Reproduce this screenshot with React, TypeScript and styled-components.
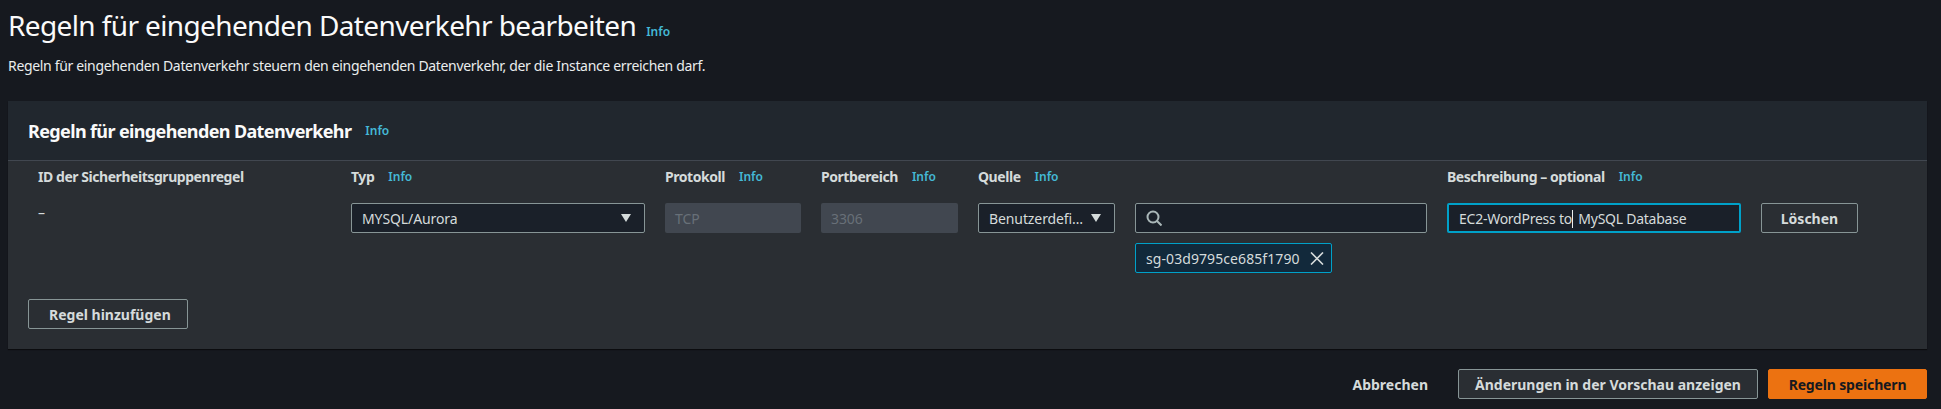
import React from 'react';
import styled, { createGlobalStyle } from 'styled-components';

const GlobalStyle = createGlobalStyle`
  html, body {
    margin: 0;
    padding: 0;
    background: #16191f;
  }
  body {
    font-family: 'Noto Sans', 'Liberation Sans', sans-serif;
    color: #d5dbdb;
    overflow: hidden;
  }
`;

const Page = styled.div`
  width: 1941px;
  height: 409px;
  box-sizing: border-box;
  padding: 0 14px 0 8px;
  display: flex;
  flex-direction: column;
`;

const PageHeader = styled.header`
  height: 101px;
  flex: none;
`;

const TitleRow = styled.div`
  display: flex;
  align-items: baseline;
  gap: 10px;
  padding-top: 7px;
`;

const PageTitle = styled.h1`
  margin: 0;
  font-size: 28px;
  line-height: 36px;
  font-weight: 400;
  color: #fafafa;
  letter-spacing: -0.62px;
`;

const InfoLink = styled.a`
  font-size: 12px;
  font-weight: 600;
  letter-spacing: 0;
  color: #44b9d6;
`;

const PageDescription = styled.p`
  margin: 13px 0 0;
  font-size: 14px;
  line-height: 20px;
  color: #eaeded;
  letter-spacing: -0.33px;
`;

const Panel = styled.section`
  height: 248px;
  flex: none;
  display: flex;
  flex-direction: column;
  background: #2a2e33;
  box-shadow: 0 1px 1px rgba(0, 0, 0, 0.5);
`;

const PanelHeader = styled.div`
  height: 59px;
  flex: none;
  display: flex;
  align-items: center;
  gap: 14px;
  padding: 0 20px;
  background: #21272e;
  border-bottom: 1px solid #414750;
`;

const PanelTitle = styled.h2`
  margin: 0;
  font-size: 18px;
  font-weight: 700;
  color: #fafafa;
  letter-spacing: -0.63px;
`;

const RuleGrid = styled.div`
  display: grid;
  grid-template-columns: 303px 294px 136px 137px 137px 292px 294px 97px;
  column-gap: 20px;
  padding: 5px 0 0 20px;
`;

const ColumnHead = styled.div<{ $span?: number }>`
  grid-column: span ${(p) => p.$span ?? 1};
  display: flex;
  align-items: center;
  gap: 14px;
  height: 20px;
  margin-bottom: 17px;
  font-size: 14px;
  font-weight: 700;
  color: #d5dbdb;
  letter-spacing: -0.45px;
`;

const IdHead = styled(ColumnHead)`
  padding-left: 10px;
`;

const IdValue = styled.div`
  padding-left: 10px;
  font-size: 14px;
  line-height: 20px;
  color: #d5dbdb;
`;

const Field = styled.div<{ $disabled?: boolean; $focused?: boolean }>`
  box-sizing: border-box;
  height: 30px;
  display: flex;
  align-items: center;
  justify-content: space-between;
  padding: 0 13px 0 10px;
  font-size: 14px;
  letter-spacing: -0.1px;
  white-space: nowrap;
  border-radius: 2px;
  color: ${(p) => (p.$disabled ? '#687078' : '#d5dbdb')};
  background: ${(p) => (p.$disabled ? '#414750' : '#1a2029')};
  border: ${(p) => (p.$disabled ? 'none' : p.$focused ? '2px solid #00a1c9' : '1px solid #879596')};
`;

const Caret = styled.svg`
  width: 10px;
  height: 8px;
  flex: none;
  fill: #d5dbdb;
`;

const SearchField = styled(Field)`
  justify-content: flex-start;
`;

const SearchIcon = styled.svg`
  width: 16px;
  height: 16px;
  fill: none;
  stroke: #aab7b8;
  stroke-width: 2;
`;

const SourceStack = styled.div`
  display: flex;
  flex-direction: column;
  gap: 10px;
`;

const Token = styled.div`
  box-sizing: border-box;
  width: 197px;
  height: 30px;
  display: flex;
  align-items: center;
  justify-content: space-between;
  padding: 0 7px 0 10px;
  font-size: 14px;
  letter-spacing: 0.08px;
  color: #d5dbdb;
  background: #12293b;
  border: 1px solid #00a1c9;
  border-radius: 2px;
`;

const CloseIcon = styled.svg`
  width: 14px;
  height: 13px;
  fill: none;
  stroke: #d5dbdb;
  stroke-width: 1.6;
`;

const Cursor = styled.span`
  display: inline-block;
  width: 1px;
  height: 18px;
  margin: 0 2px 0 0;
  background: #eaeded;
  vertical-align: -4px;
`;

const DescriptionValue = styled.span`
  letter-spacing: -0.25px;
`;

const Button = styled.button<{ $primary?: boolean; $plain?: boolean }>`
  box-sizing: border-box;
  height: 30px;
  padding: 0 20px;
  font-family: inherit;
  font-size: 14px;
  font-weight: 700;
  white-space: nowrap;
  border-radius: 2px;
  letter-spacing: ${(p) => (p.$primary ? '-0.15px' : '0')};
  color: ${(p) => (p.$primary ? '#16191f' : '#d5dbdb')};
  background: ${(p) => (p.$primary ? '#ec7211' : p.$plain ? 'transparent' : '#2a2e33')};
  border: ${(p) => (p.$primary ? '1px solid #ec7211' : p.$plain ? 'none' : '1px solid #879596')};
`;

const AddRow = styled.div`
  margin-top: auto;
  padding: 0 0 20px 20px;
`;

const AddButton = styled(Button)`
  width: 160px;
`;

const DeleteButton = styled(Button)`
  width: 97px;
  padding: 0;
`;

const Footer = styled.footer`
  display: flex;
  justify-content: flex-end;
  align-items: center;
  gap: 10px;
  margin-top: 20px;
`;

const PreviewButton = styled(Button)`
  width: 300px;
  padding: 0;
`;

const SaveButton = styled(Button)`
  width: 159px;
  padding: 0;
`;

const CaretIcon = () => (
  <Caret viewBox="0 0 10 8">
    <path d="M0 0h10L5 8z" />
  </Caret>
);

const App: React.FC = () => {
  return (
    <Page>
      <GlobalStyle />
      <PageHeader>
        <TitleRow>
          <PageTitle>Regeln für eingehenden Datenverkehr bearbeiten</PageTitle>
          <InfoLink>Info</InfoLink>
        </TitleRow>
        <PageDescription>
          Regeln für eingehenden Datenverkehr steuern den eingehenden Datenverkehr, der die Instance erreichen darf.
        </PageDescription>
      </PageHeader>

      <Panel>
        <PanelHeader>
          <PanelTitle>Regeln für eingehenden Datenverkehr</PanelTitle>
          <InfoLink>Info</InfoLink>
        </PanelHeader>
        <RuleGrid>
          <IdHead>ID der Sicherheitsgruppenregel</IdHead>
          <ColumnHead>Typ <InfoLink>Info</InfoLink></ColumnHead>
          <ColumnHead>Protokoll <InfoLink>Info</InfoLink></ColumnHead>
          <ColumnHead>Portbereich <InfoLink>Info</InfoLink></ColumnHead>
          <ColumnHead $span={2}>Quelle <InfoLink>Info</InfoLink></ColumnHead>
          <ColumnHead $span={2}>Beschreibung – optional <InfoLink>Info</InfoLink></ColumnHead>

          <IdValue>–</IdValue>
          <Field>MYSQL/Aurora <CaretIcon /></Field>
          <Field $disabled>TCP</Field>
          <Field $disabled>3306</Field>
          <Field>Benutzerdefi… <CaretIcon /></Field>
          <SourceStack>
            <SearchField>
              <SearchIcon viewBox="0 0 16 16">
                <circle cx="7" cy="7" r="5.5" />
                <path d="M11 11l4.5 4.5" />
              </SearchIcon>
            </SearchField>
            <Token>
              sg-03d9795ce685f1790
              <CloseIcon viewBox="0 0 14 13">
                <path d="M1 .5l12 12M13 .5l-12 12" />
              </CloseIcon>
            </Token>
          </SourceStack>
          <Field $focused>
            <DescriptionValue>EC2-WordPress to<Cursor /> MySQL Database</DescriptionValue>
          </Field>
          <DeleteButton>Löschen</DeleteButton>
        </RuleGrid>
        <AddRow>
          <AddButton>Regel hinzufügen</AddButton>
        </AddRow>
      </Panel>

      <Footer>
        <Button $plain>Abbrechen</Button>
        <PreviewButton>Änderungen in der Vorschau anzeigen</PreviewButton>
        <SaveButton $primary>Regeln speichern</SaveButton>
      </Footer>
    </Page>
  );
};

export default App;
